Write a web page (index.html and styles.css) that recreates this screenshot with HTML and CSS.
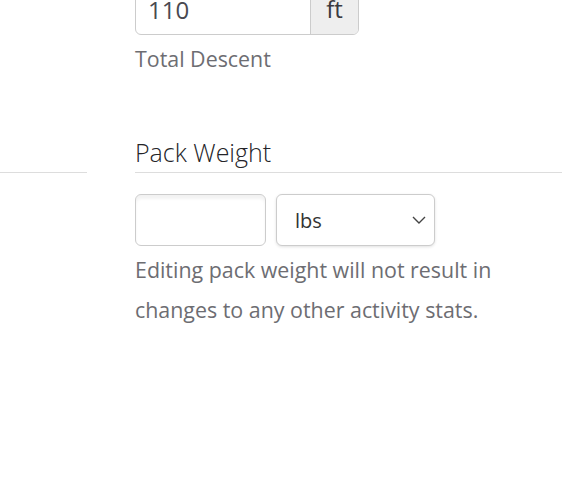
FILE: index.html
```html
<!DOCTYPE html>
<html lang="en">
<head>
    <meta charset="UTF-8">
    <meta name="viewport" content="width=device-width, initial-scale=1.0">
    <title>Edit Activity</title>
    <link rel="stylesheet" href="styles.css">
</head>
<body>
    <div class="edit-form">
        <div class="form-row">
            <div class="side-col"></div>
            <div class="field-col">
                <div class="input-addon">
                    <input type="text" class="addon-input" value="110">
                    <span class="addon-unit">ft</span>
                </div>
                <div class="field-label">Total Descent</div>
            </div>
        </div>

        <div class="form-row section-head">
            <div class="side-col divider"></div>
            <div class="field-col divider">
                <h2>Pack Weight</h2>
            </div>
        </div>

        <div class="form-row">
            <div class="side-col"></div>
            <div class="field-col">
                <div class="weight-row">
                    <input type="text" class="weight-input">
                    <div class="select-wrap">
                        <select class="unit-select">
                            <option selected>lbs</option>
                            <option>kg</option>
                        </select>
                        <svg class="chevron" width="14" height="8" viewBox="0 0 14 8">
                            <path d="M1 1 L7 7 L13 1" fill="none" stroke="#444" stroke-width="1.4"/>
                        </svg>
                    </div>
                </div>
                <p class="help-text">Editing pack weight will not result in changes to any other activity stats.</p>
            </div>
        </div>
    </div>
</body>
</html>
```

FILE: styles.css
```css
:root {
    --text-dark: #333333;
    --text-muted: #6d6d72;
    --border: #cccccc;
    --divider: #dddddd;
}

* {
    margin: 0;
    padding: 0;
    box-sizing: border-box;
    font-family: 'Open Sans', sans-serif;
}

body {
    background-color: #ffffff;
    color: var(--text-dark);
    line-height: 2;
}

.edit-form {
    margin-top: -17px;
    padding-right: 10px;
}

.form-row {
    display: grid;
    grid-template-columns: 87px 427px;
    column-gap: 48px;
}

.input-addon {
    display: flex;
    width: 224px;
    height: 52px;
    border: 1px solid var(--border);
    border-radius: 6px;
    overflow: hidden;
}

.addon-input {
    flex: 1;
    min-width: 0;
    border: none;
    padding: 0 12px;
    font-size: 24px;
    color: #494950;
    background: transparent;
    outline: none;
}

.addon-unit {
    width: 48px;
    display: flex;
    align-items: center;
    justify-content: center;
    background-color: #eeeeee;
    border-left: 1px solid var(--border);
    font-size: 24px;
    color: #3a3a40;
}

.field-label {
    margin-top: 4px;
    font-size: 21.4px;
    line-height: 40px;
    color: var(--text-muted);
}

.section-head {
    margin-top: 59px;
}

.divider {
    border-bottom: 1px solid var(--divider);
}

h2 {
    font-size: 25px;
    font-weight: 300;
    line-height: 29px;
    color: #242428;
    padding-bottom: 5px;
}

.weight-row {
    display: flex;
    gap: 10px;
    margin-top: 21px;
}

.weight-input {
    width: 131px;
    height: 52px;
    border: 1px solid var(--border);
    border-radius: 6px;
    box-shadow: inset 0 4px 3px rgba(0, 0, 0, 0.05);
    font-size: 20px;
    padding: 0 12px;
    outline: none;
}

.select-wrap {
    position: relative;
    width: 159px;
}

.unit-select {
    appearance: none;
    -webkit-appearance: none;
    width: 100%;
    height: 52px;
    border: 1px solid var(--border);
    border-radius: 6px;
    box-shadow: 0 1px 3px rgba(0, 0, 0, 0.12);
    background-color: #ffffff;
    font-size: 20px;
    color: var(--text-dark);
    padding: 0 18px;
    outline: none;
}

.chevron {
    position: absolute;
    right: 9px;
    top: 22px;
    pointer-events: none;
}

.help-text {
    max-width: 380px;
    margin-top: 4px;
    font-size: 21.4px;
    line-height: 40px;
    color: var(--text-muted);
}
```
